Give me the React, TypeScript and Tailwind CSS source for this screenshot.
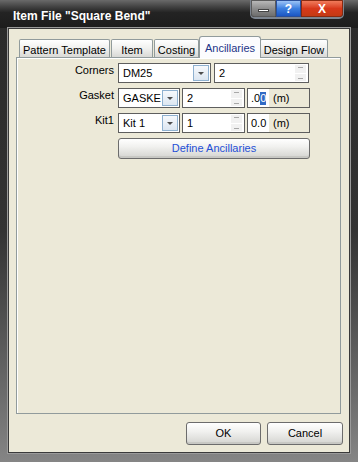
import type { ReactNode } from 'react';

const TABS = ['Pattern Template', 'Item', 'Costing', 'Ancillaries', 'Design Flow'];
const TAB_WIDTHS = ['w-[91px]', 'w-[42px]', 'w-[45px]', 'w-[62px]', 'w-[68px]'];

export default function App() {
  return (
    <div className="flex h-[462px] w-[358px] flex-col bg-gradient-to-b from-[#2a2a2a] via-[#333333] to-[#858585] font-['Liberation_Sans',Arial,sans-serif] text-[11px] text-black">
      <TitleBar />
      <div className="mx-[8px] mb-[9px] flex flex-1 flex-col border border-[#3a3a3a] bg-[#ece9d8] px-[6px] pb-[7px] pt-[7px] shadow-[0_0_0_1px_#9a9a9a]">
        <div className="ml-[1px] mr-[2px] flex flex-1 flex-col">
          <div className="flex h-[21px] items-end pl-[3px]">
            {TABS.map((t, i) => (
              <Tab key={t} label={t} width={TAB_WIDTHS[i]} active={t === 'Ancillaries'} />
            ))}
          </div>
          <div className="flex-1 border border-[#919b9c] bg-[#ece9d8] pt-[5px] shadow-[inset_1px_1px_0_#ffffff]">
            <div className="grid grid-cols-[97px_1fr] gap-x-[4px] gap-y-[5px] pr-[30px]">
              <Label text="Corners" />
              <div className="flex gap-[3px]">
                <Combo value="DM25" className="w-[93px]" />
                <Spin value="2" className="w-[95px]" />
              </div>

              <Label text="Gasket" />
              <div className="flex gap-[2px]">
                <Combo value="GASKE" className="w-[62px]" />
                <Spin value="2" className="w-[63px]" />
                <LengthBox value=".0" sel="0" />
              </div>

              <Label text="Kit1" />
              <div className="flex gap-[2px]">
                <Combo value="Kit 1" className="w-[62px]" />
                <Spin value="1" className="w-[63px]" />
                <LengthBox value="0.0" />
              </div>

              <div />
              <XpButton className="h-[21px] w-[192px]" textClass="text-[#1f4fd6]">
                Define Ancillaries
              </XpButton>
            </div>
          </div>
        </div>
        <div className="mt-[8px] flex justify-end gap-[6px]">
          <XpButton className="h-[23px] w-[75px]">OK</XpButton>
          <XpButton className="h-[23px] w-[76px]">Cancel</XpButton>
        </div>
      </div>
    </div>
  );
}

function TitleBar() {
  return (
    <div className="flex h-[28px] items-start bg-gradient-to-b from-[#6a6a6a] via-[#232323] via-45% to-[#1c1c1c]">
      <div className="pl-[13px] pt-[9px] text-[12px] font-bold leading-[14px] text-white">
        Item File "Square Bend"
      </div>
      <div className="ml-auto mr-[15px] flex rounded-b-[4px] shadow-[0_1px_0_1px_#7d8590]">
        <div className="flex h-[17px] w-[25px] items-center justify-center rounded-bl-[3px] border border-[#5a5a5a] bg-gradient-to-b from-[#b8b8b8] via-[#8d8d8d] to-[#6e6e6e]">
          <div className="mt-[4px] h-[3px] w-[11px] border border-[#444444] bg-white" />
        </div>
        <div className="flex h-[17px] w-[25px] items-center justify-center border border-[#2a4f9a] bg-gradient-to-b from-[#9cc3f5] via-[#3c7fe0] to-[#1b56c4] text-[12px] font-bold leading-none text-white">
          ?
        </div>
        <div className="flex h-[17px] w-[42px] items-center justify-center rounded-br-[3px] border border-[#8a2a10] bg-gradient-to-b from-[#f07a5a] via-[#d8381a] to-[#c43a14] text-[12px] font-bold leading-none text-white">
          X
        </div>
      </div>
    </div>
  );
}

function Tab({ label, width, active }: { label: string; width: string; active: boolean }) {
  if (active) {
    return (
      <div
        className={`relative z-10 -mb-[1px] -ml-[1px] -mr-[1px] flex h-[22px] items-start justify-center rounded-t-[3px] border border-b-0 border-[#919b9c] bg-[#fcfcfe] pt-[3px] text-[#1c3487] ${width}`}
      >
        {label}
      </div>
    );
  }
  return (
    <div
      className={`mr-[1px] flex h-[18px] items-start justify-center rounded-t-[2px] border border-b-0 border-[#919b9c] bg-gradient-to-b from-white via-[#f0f0ee] to-[#d9d9d6] pt-[2px] ${width}`}
    >
      {label}
    </div>
  );
}

function Label({ text }: { text: string }) {
  return <div className="pt-[1px] text-right leading-[13px]">{text}</div>;
}

function Combo({ value, className }: { value: string; className: string }) {
  return (
    <div className={`flex h-[20px] border border-[#5e5e5e] bg-white ${className}`}>
      <div className="flex-1 overflow-hidden whitespace-nowrap pl-[4px] pt-[3px] leading-[13px]">{value}</div>
      <div className="m-[1px] flex w-[16px] items-center justify-center border border-[#8fb1d0] bg-gradient-to-b from-[#f7f9fc] to-[#dce6f1]">
        <div className="h-0 w-0 border-x-[3px] border-t-[3px] border-x-transparent border-t-[#4d4d4d]" />
      </div>
    </div>
  );
}

function Spin({ value, className }: { value: string; className: string }) {
  return (
    <div className={`flex h-[20px] border border-[#5e5e5e] bg-white ${className}`}>
      <div className="flex-1 pl-[4px] pt-[3px] leading-[13px]">{value}</div>
      <div className="my-[1px] mr-[2px] flex w-[11px] flex-col gap-[1px]">
        <div className="flex flex-1 items-start justify-center bg-[#f1f1f1] pt-[2px]">
          <div className="h-[1px] w-[5px] bg-[#a8a8a8]" />
        </div>
        <div className="flex flex-1 items-end justify-center bg-[#f1f1f1] pb-[2px]">
          <div className="h-[1px] w-[5px] bg-[#a8a8a8]" />
        </div>
      </div>
    </div>
  );
}

function LengthBox({ value, sel }: { value: string; sel?: string }) {
  return (
    <div className="flex h-[20px] w-[63px] border border-[#5e5e5e] bg-[#ece9d8]">
      <div className="flex w-[21px] items-start bg-white pl-[3px] pt-[3px] leading-[13px]">
        <span>{value}</span>
        {sel && <span className="bg-[#316ac5] text-white">{sel}</span>}
      </div>
      <div className="pl-[4px] pt-[3px] leading-[13px]">(m)</div>
    </div>
  );
}

function XpButton({
  children,
  className,
  textClass = 'text-black',
}: {
  children: ReactNode;
  className: string;
  textClass?: string;
}) {
  return (
    <div
      className={`flex items-center justify-center rounded-[3px] border border-[#6c6c6c] bg-gradient-to-b from-[#ffffff] via-[#f1f1ef] via-40% to-[#d4d4d0] shadow-[inset_0_-2px_0_#c8c8c4] ${className} ${textClass}`}
    >
      {children}
    </div>
  );
}
